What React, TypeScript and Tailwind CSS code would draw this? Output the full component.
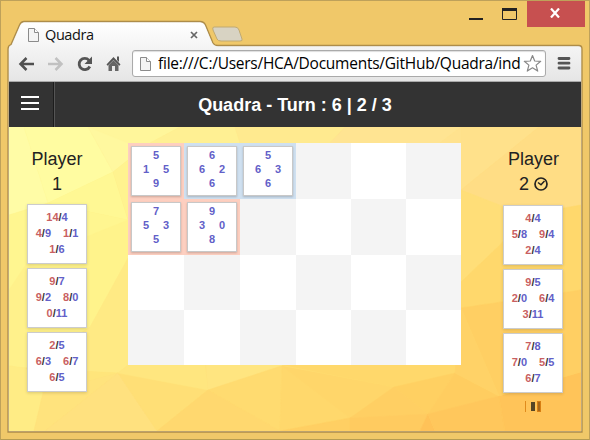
import React from "react";

const file = (
  <svg width="13" height="16" viewBox="0 0 13 16" className="shrink-0">
    <path d="M1.5 1.5h6l4 4v9h-10z" fill="#f4f4f4" stroke="#8b8b8b" />
    <path d="M7.5 1.5v4h4" fill="#fff" stroke="#8b8b8b" />
  </svg>
);

function Frac({ v }: { v: string }) {
  const [a, b] = v.split("/");
  return (
    <span>
      <span className="text-[#c95f62]">{a}</span>
      <span className="text-[#333]">/</span>
      <span className="text-[#6260c8]">{b}</span>
    </span>
  );
}

function Card({ v }: { v: string[] }) {
  return (
    <div className="h-[60px] w-[60px] border border-[#ccc] bg-white pt-1 text-center text-[11px] font-bold leading-4 shadow-[0_1px_3px_rgba(0,0,0,0.15)]">
      <div><Frac v={v[0]} /></div>
      <div className="flex justify-center gap-3"><Frac v={v[1]} /><Frac v={v[2]} /></div>
      <div><Frac v={v[3]} /></div>
    </div>
  );
}

function Tile({ v }: { v: string }) {
  return (
    <div className="h-[50px] w-[50px] border border-[#c8c8c8] bg-white pt-px text-center text-[11px] font-bold leading-[14px] text-[#6260c8] shadow-[0_1px_2px_rgba(0,0,0,0.2)]">
      <div>{v[0]}</div>
      <div className="flex justify-center gap-[14px]"><span>{v[1]}</span><span>{v[2]}</span></div>
      <div>{v[3]}</div>
    </div>
  );
}

const tiles = ["5159", "6626", "5636", "", "", "", "7535", "9308"];
const tints = ["bg-[#fdcfc0]", "bg-[#cfe0f0]", "bg-[#cfe0f0]", "", "", "", "bg-[#fdcfc0]", "bg-[#fdcfc0]"];

function Board() {
  return (
    <div className="grid h-[222px] w-[333px] grid-cols-[56px_56px_56px_55px_55px_55px] grid-rows-[56px_56px_55px_55px]">
      {Array.from({ length: 24 }, (_, i) => {
        const shade = (Math.floor(i / 6) + (i % 6)) % 2 ? "bg-[#f4f4f4]" : "bg-white";
        return (
          <div key={i} className={"flex items-center justify-center " + (tints[i] || shade)}>
            {tiles[i] && <Tile v={tiles[i]} />}
          </div>
        );
      })}
    </div>
  );
}

const facets: [string, string][] = [
  ["9,127 24,127 48,203 9,215", "#fffca6"],
  ["24,127 88,127 113,172 48,203", "#fffca1"],
  ["88,127 128,127 128,160 113,172", "#fff89f"],
  ["113,172 128,220 48,203", "#fff894"],
  ["113,172 128,160 128,220", "#fff38f"],
  ["9,215 48,203 128,220 128,258 9,290", "#fff690"],
  ["9,290 29,260 128,258 90,327 26,368 9,366", "#fff18b"],
  ["29,260 128,220 128,258 90,327", "#fff38b"],
  ["128,258 128,365 118,373 26,368 90,327", "#ffea84"],
  ["88,127 180,127 150,143 128,143", "#fff69b"],
  ["180,127 235,127 240,143 150,143", "#fff093"],
  ["235,127 345,127 330,143 240,143", "#ffea8f"],
  ["345,127 461,127 440,143 330,143", "#ffe492"],
  ["461,127 461,143 440,143", "#ffe28e"],
  ["9,366 26,368 43,393 34,431 9,431", "#ffec85"],
  ["26,368 118,373 43,393", "#ffe57b"],
  ["43,393 118,373 45,431 34,431", "#ffe37d"],
  ["118,373 157,431 45,431", "#ffe17f"],
  ["118,373 208,390 157,431", "#ffdf76"],
  ["118,373 128,365 205,365 208,390", "#ffe67f"],
  ["208,390 206,365 282,365", "#ffe580"],
  ["208,390 282,366 280,431", "#ffdb70"],
  ["208,390 280,431 157,431", "#ffd86f"],
  ["282,366 350,418 280,431", "#ffd86c"],
  ["282,366 394,387 350,418", "#ffd66a"],
  ["282,365 461,365 455,373 394,387", "#ffd86b"],
  ["394,387 455,373 428,414", "#ffd062"],
  ["350,418 394,387 428,414", "#ffcf63"],
  ["280,431 350,418 350,431", "#ffcf63"],
  ["350,418 428,414 420,431 350,431", "#ffcb60"],
  ["428,414 435,431 420,431", "#ffc258"],
  ["455,373 499,396 428,414", "#ffcd60"],
  ["428,414 499,396 505,431 435,431", "#ffc75c"],
  ["499,396 581,372 581,431 505,431", "#ffc459"],
  ["461,127 539,127 461,190", "#ffe18b"],
  ["539,127 581,127 581,205 525,215 461,190", "#ffdd85"],
  ["461,190 525,215 500,245 461,282", "#ffde78"],
  ["461,282 500,245 525,215 581,205 581,290 461,308", "#ffd86c"],
  ["461,308 581,290 581,372 499,396", "#ffcf63"],
  ["461,308 499,396 455,373", "#ffd267"],
];

function Backdrop() {
  return (
    <svg className="absolute inset-0" width="572" height="304" viewBox="9 127 572 304">
      <path d="M9 127h572v304H9z" fill="#ffdf78" />
      {facets.map(([points, fill]) => (
        <polygon key={points} points={points} fill={fill} stroke={fill} strokeWidth="0.5" />
      ))}
    </svg>
  );
}

export default function App() {
  return (
    <div className="relative flex h-[440px] w-[590px] flex-col overflow-hidden border border-b-[#b59b52] border-[#bea15a] bg-[#f0c869] font-['Liberation_Sans',Arial,sans-serif]">
      <svg className="absolute -left-px -top-px" width="590" height="440">
        <defs>
          <linearGradient id="chrome" x1="0" y1="0" x2="0" y2="1">
            <stop offset="0" stopColor="#fff" />
            <stop offset="1" stopColor="#e5e5e5" />
          </linearGradient>
        </defs>
        <path d="M8 432V49Q8 45.5 11 44.500L19.500 25Q21 21.500 24 21.500H200Q204 21.500 205.500 25L213 43Q214.500 45.500 218 45.500H579Q582 45.500 582 49V432Z" fill="#e4e2d9" stroke="#ad8c49" strokeWidth="1.300" />
        <path d="M9 82V49Q9 46 12 45L20.500 25Q22 22.500 24 22.500H200Q203 22.500 204.500 25L212 43Q214 46.500 218 46.500H578Q581 46.500 581 49V82Z" fill="url(#chrome)" />
        <path d="M214 27h21q3 0 4 3l3 9q1 2-2 2h-19q-3 0-4-2l-4-9q-1-3 1-3z" fill="#d8d3c3" stroke="#c1aa72" />
      </svg>

      <div className="relative flex h-[45px] items-start">
        <div className="mt-6 flex h-5 w-[206px] items-center pl-[26px] pr-[9px]">
          {file}
          <span className="-mt-px ml-[5px] flex-1 font-['Open_Sans',sans-serif] text-[14.500px] leading-5 tracking-[-0.400px] text-[#111]">Quadra</span>
          <svg width="8" height="8" viewBox="0 0 8 8"><path d="M1 1l6 6M7 1L1 7" stroke="#666" strokeWidth="1.700" /></svg>
        </div>
        <div className="ml-auto flex h-[26px] items-start">
          <svg width="58" height="26"><path d="M0 17h14v2H0z" fill="#222" /><path d="M33.500 8v10.500h14V8z" fill="none" stroke="#222" /><path d="M33 7h15v3H33z" fill="#222" /></svg>
          <div className="mr-1 flex h-[26px] w-[58px] items-center justify-center bg-[#c75050]">
            <svg width="12" height="10" viewBox="0 0 12 10" className="-mt-0.5 -ml-0.5"><path d="M2 .5l8 9M10 .5l-8 9" stroke="#fff" strokeWidth="2.200" /></svg>
          </div>
        </div>
      </div>

      <div className="relative mx-2 flex h-[36px] w-[572px] shrink-0 items-center border-b border-[#aaa]">
        <svg width="115" height="34" className="shrink-0" fill="none">
          <g strokeWidth="2.500"><path d="M25 17H12M17.500 11l-6 6 6 6" stroke="#505050" /><path d="M39 17h13M46.500 11l6 6-6 6" stroke="#c1c1c1" /></g>
          <path d="M80 13.300a5.600 5.600 0 1 0 .8 6.200" stroke="#555" strokeWidth="2.800" />
          <path d="M83 9.500v7.500h-7.500z" fill="#555" />
          <path d="M97.500 17.500l7-7.500 7 7.500-1.200 1.200-5.800-5.700-5.800 5.700z" fill="#555" />
          <path d="M108 9.500h2v5.500l-2-2z" fill="#555" />
          <path d="M99.500 18.300l5-5 5 5v5.700h-3.500v-5h-3v5h-3.500z" fill="#666" />
        </svg>
        <div className="ml-[8px] flex h-[27px] w-[414px] items-center rounded-[3px] border border-[#aaa] bg-white pl-[6px] pr-[3px] shadow-[inset_0_1px_1px_#ddd]">
          {file}
          <span className="ml-[6px] mr-[-1px] w-[365px] shrink-0 overflow-hidden whitespace-nowrap font-['Open_Sans',sans-serif] text-[15.500px] tracking-[-0.250px] text-black">file:///C:/Users/HCA/Documents/GitHub/Quadra/ind</span>
          <svg width="19" height="19" viewBox="0 0 19 19" className="ml-px shrink-0"><path d="M9.500 1.500l2.200 5.500 6 .3-4.600 3.800 1.600 6-5.200-3.300-5.200 3.300 1.600-6L1.300 7.300l6-.3z" fill="#fff" stroke="#888" strokeWidth="1.200" strokeLinejoin="round" /></svg>
        </div>
        <svg width="14" height="14" className="-mt-px ml-[11px] shrink-0"><path d="M2 2.500h10M2 7.200h10M2 12h10" stroke="#555" strokeWidth="2.800" strokeLinecap="round" /></svg>
      </div>

      <header className="relative mx-2 flex h-[45px] w-[572px] shrink-0 items-center bg-[#333]">
        <div className="flex h-full w-[45px] items-center justify-center border-r border-[#1c1c1c] pb-[3px] pr-0.5 shadow-[1px_0_0_#555]">
          <svg width="18" height="14"><path d="M0 1h18M0 7h18M0 13h18" stroke="#fff" strokeWidth="2" /></svg>
        </div>
        <h1 className="mr-[45px] flex-1 whitespace-nowrap pt-px text-center text-[18px] font-bold text-white">Quadra - Turn : 6 | 2 / 3</h1>
      </header>

      <main className="relative mx-2 flex h-[304px] w-[572px] shrink-0 items-start">
        <Backdrop />
        <aside className="relative ml-[18px] mt-5 flex w-[60px] flex-col items-center gap-1 text-[#222]">
          <h2 className="mb-[3px] text-center text-[18px] leading-[25px]">Player<br />1</h2>
          <Card v={["14/4", "4/9", "1/1", "1/6"]} />
          <Card v={["9/7", "9/2", "8/0", "0/11"]} />
          <Card v={["2/5", "6/3", "6/7", "6/5"]} />
        </aside>
        <div className="relative ml-[41px] mt-4"><Board /></div>
        <aside className="relative ml-[42px] mt-5 flex w-[60px] flex-col items-center gap-1 text-[#222]">
          <h2 className="mb-1 pl-px text-center text-[18px] leading-[25px]">
            Player
            <span className="flex items-center justify-center gap-[5px]">2
              <svg width="14" height="14" viewBox="0 0 14 14" fill="none" stroke="#222" className="-mt-0.5"><circle cx="7" cy="7" r="6" strokeWidth="1.700" /><path d="M4 5.500l3 2.300L10.500 4" strokeWidth="1.500" /></svg>
            </span>
          </h2>
          <Card v={["4/4", "5/8", "9/4", "2/4"]} />
          <Card v={["9/5", "2/0", "6/4", "3/11"]} />
          <Card v={["7/8", "7/0", "5/5", "6/7"]} />
          <svg width="16" height="11" className="mt-1"><path d="M0 0h1v11H0z" fill="#e08b1c" /><path d="M6 1h4v9H6z" fill="#554525" /><path d="M12 0h4v11h-4z" fill="#d77e12" /><path d="M13 1h2v9h-2z" fill="#a7681b" /></svg>
        </aside>
      </main>
    </div>
  );
}
